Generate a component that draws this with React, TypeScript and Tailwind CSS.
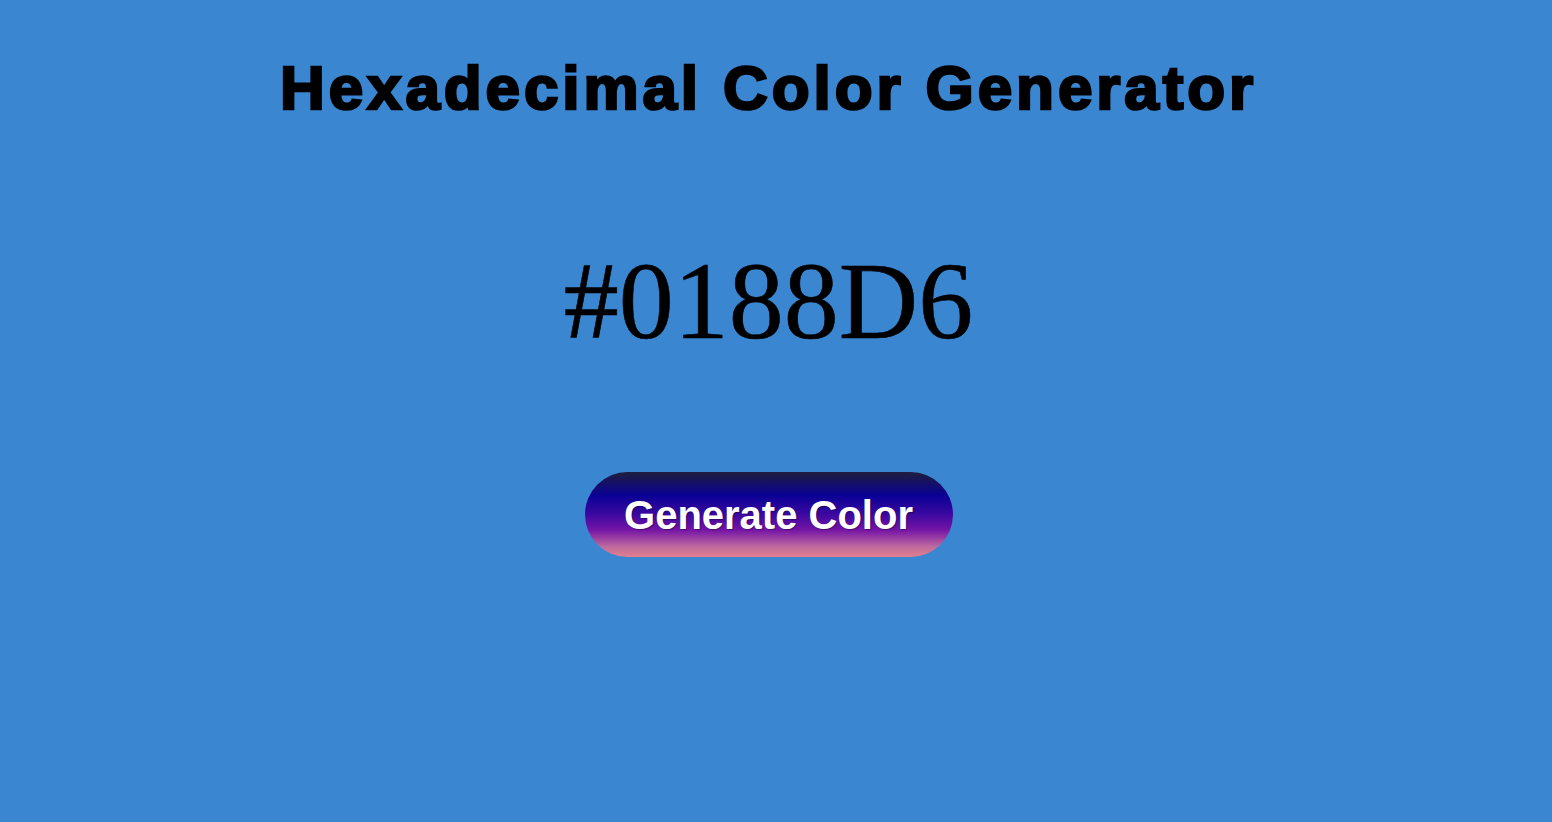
export default function App() {
  return (
    <div className="min-h-screen bg-[#3a86d0] flex flex-col items-center pt-[57px] pr-[15px]">
      <h1 className="text-[62px] leading-none font-bold tracking-[3.9px] text-black [-webkit-text-stroke:2.6px_black] font-['Liberation_Sans',Arial,sans-serif]">
        Hexadecimal Color Generator
      </h1>
      <div className="mt-[127px] text-[110px] leading-none text-black [-webkit-text-stroke:0.6px_black] font-['Liberation_Serif','Times_New_Roman',serif]">
        #0188D6
      </div>
      <button className="mt-[116px] w-[368px] h-[85px] rounded-full flex items-center justify-center bg-[linear-gradient(to_bottom,#1e1e3c_0%,#0a0096_28%,#3c08a0_50%,#7414a6_68%,#c06a9e_88%,#e2808c_100%)] text-white text-[40px] font-bold [text-shadow:1px_1px_1px_rgba(0,0,0,0.35)] font-['Liberation_Sans',Arial,sans-serif]">
        Generate Color
      </button>
    </div>
  );
}
